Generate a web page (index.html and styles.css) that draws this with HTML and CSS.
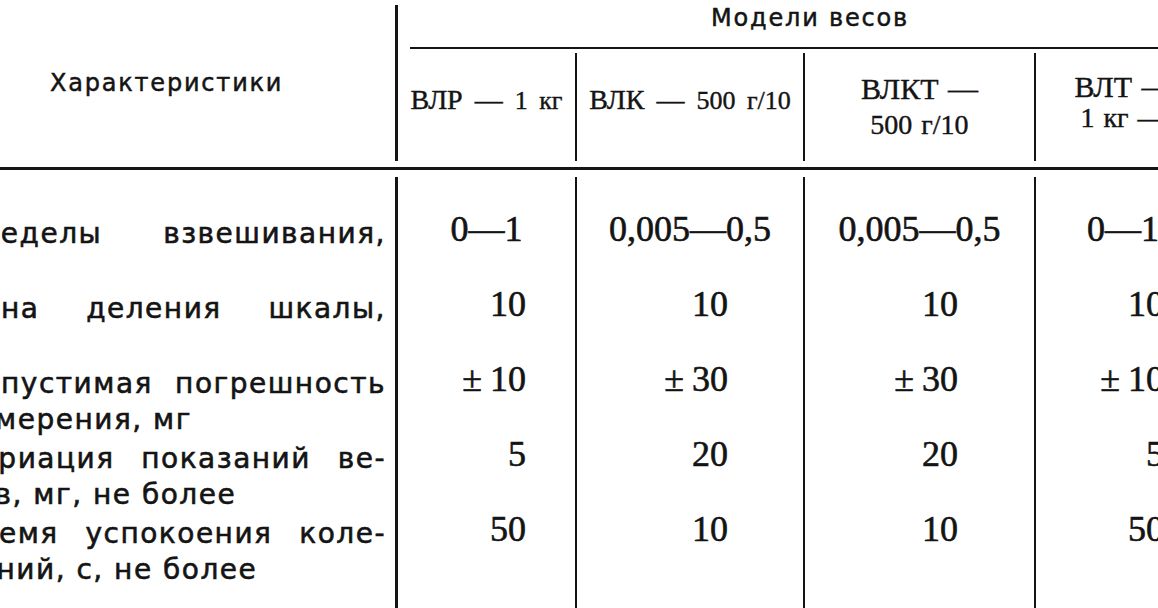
FILE: index.html
```html
<!DOCTYPE html>
<html lang="ru">
<head>
<meta charset="utf-8">
<title>Модели весов</title>
<link rel="stylesheet" href="styles.css">
</head>
<body>
<div class="sheet">
  <div class="head">
    <div class="h-char">Характеристики</div>
    <div class="h-models">Модели весов</div>
    <div class="sub c1"><span>ВЛР — <span class="sm">1 кг</span></span></div>
    <div class="sub c2 bl"><span>ВЛК — <span class="sm">500 г/10</span></span></div>
    <div class="sub c3 bl two"><span>ВЛКТ —</span><span class="sm">500 г/10</span></div>
    <div class="sub c4 bl two tight"><span>ВЛТ —</span><span class="sm">1 кг —</span></div>
  </div>
  <div class="body">
    <div class="col col-char">
      <div class="row"><div class="ln j">Пределы взвешивания,</div></div>
      <div class="row"><div class="ln j">Цена деления шкалы,</div></div>
      <div class="row"><div class="ln j">Допустимая погрешность</div><div class="ln">измерения, мг</div></div>
      <div class="row"><div class="ln j">Вариация показаний ве-</div><div class="ln">сов, мг, не более</div></div>
      <div class="row"><div class="ln j">Время успокоения коле-</div><div class="ln">баний, с, не более</div></div>
    </div>
    <div class="col num c1">
      <div class="cell range">0—1</div>
      <div class="cell">10</div>
      <div class="cell"><span class="pm">±</span>10</div>
      <div class="cell">5</div>
      <div class="cell">50</div>
    </div>
    <div class="col num c2 bl">
      <div class="cell range">0,005—0,5</div>
      <div class="cell">10</div>
      <div class="cell"><span class="pm">±</span>30</div>
      <div class="cell">20</div>
      <div class="cell">10</div>
    </div>
    <div class="col num c3 bl">
      <div class="cell range">0,005—0,5</div>
      <div class="cell">10</div>
      <div class="cell"><span class="pm">±</span>30</div>
      <div class="cell">20</div>
      <div class="cell">10</div>
    </div>
    <div class="col num c4 bl">
      <div class="cell range">0—1</div>
      <div class="cell">10</div>
      <div class="cell"><span class="pm">±</span>10</div>
      <div class="cell">5</div>
      <div class="cell">50</div>
    </div>
  </div>
</div>
</body>
</html>
```

FILE: styles.css
```css
:root {
  --ink: #141414;
  --w0: 439px;
  --w1: 177px;
  --w2: 228px;
  --w3: 231px;
  --w4: 176px;
}

html, body {
  margin: 0;
  background: #fff;
}

body {
  width: 1158px;
  height: 608px;
  overflow: hidden;
  color: var(--ink);
}

.sheet {
  margin-left: -41px;
  width: 1251px;
}

/* ---------- header ---------- */
.head {
  display: grid;
  grid-template-columns: var(--w0) var(--w1) var(--w2) var(--w3) var(--w4);
  grid-template-rows: 49px 112px;
  padding-bottom: 6px;
  border-bottom: 3px solid var(--ink);
}

.h-char {
  grid-row: 1 / 3;
  grid-column: 1;
  margin-top: 5px;
  border-right: 3px solid var(--ink);
  display: flex;
  align-items: center;
  padding-left: 91px;
  font-family: "DejaVu Sans", "Liberation Sans", sans-serif;
  font-size: 24px;
  letter-spacing: 1.8px;
  -webkit-text-stroke: 0.5px var(--ink);
}

.h-models {
  grid-column: 2 / 6;
  margin-left: 12px;
  box-sizing: border-box;
  border-bottom: 2px solid var(--ink);
  text-align: center;
  padding-top: 4px;
  font-family: "DejaVu Sans", "Liberation Sans", sans-serif;
  font-size: 24px;
  line-height: 28px;
  letter-spacing: 1.8px;
  -webkit-text-stroke: 0.5px var(--ink);
}

.sub {
  margin-top: 4px;
  display: flex;
  flex-direction: column;
  align-items: center;
  justify-content: center;
  padding-bottom: 14px;
  font-family: "Liberation Serif", "Times New Roman", serif;
  font-size: 28px;
  line-height: 34px;
  word-spacing: 5px;
  white-space: nowrap;
  -webkit-text-stroke: 0.4px var(--ink);
}

.sub .sm {
  font-size: 26px;
}

.sub.two {
  padding-bottom: 0;
  font-size: 30px;
  line-height: 36px;
  word-spacing: 2px;
}

.sub.two .sm {
  font-size: 28px;
}

.sub.tight {
  line-height: 31px;
  padding-bottom: 10px;
}

.bl {
  border-left: 2px solid var(--ink);
}

/* ---------- body ---------- */
.body {
  display: flex;
  margin-top: 7px;
}

.col {
  box-sizing: border-box;
  padding-top: 34px;
  padding-bottom: 60px;
  flex: none;
}

.col-char {
  width: var(--w0);
  border-right: 3px solid var(--ink);
  padding-right: 9px;
  font-family: "DejaVu Sans", "Liberation Sans", sans-serif;
  font-size: 28px;
  line-height: 36px;
  letter-spacing: 1.5px;
  -webkit-text-stroke: 0.6px var(--ink);
}

.col-char .row {
  height: 75px;
  padding-top: 5px;
  box-sizing: border-box;
  white-space: nowrap;
}

.ln.j {
  text-align: justify;
  text-align-last: justify;
}

.num {
  font-family: "Liberation Serif", "Times New Roman", serif;
  font-size: 36px;
  line-height: 36px;
  text-align: right;
  -webkit-text-stroke: 0.6px var(--ink);
}

.num .cell {
  height: 75px;
  white-space: nowrap;
}

.c1.num { width: var(--w1); }
.c2.num { width: var(--w2); }
.c3.num { width: var(--w3); }
.c4.num { width: var(--w4); }

.c1 .cell { padding-right: 49px; }
.c2 .cell { padding-right: 75px; }
.c3 .cell { padding-right: 76px; }
.c4 .cell { padding-right: 46px; }

.num .cell.range {
  text-align: center;
  padding-right: 0;
}

.pm {
  margin-right: 8px;
}
```
